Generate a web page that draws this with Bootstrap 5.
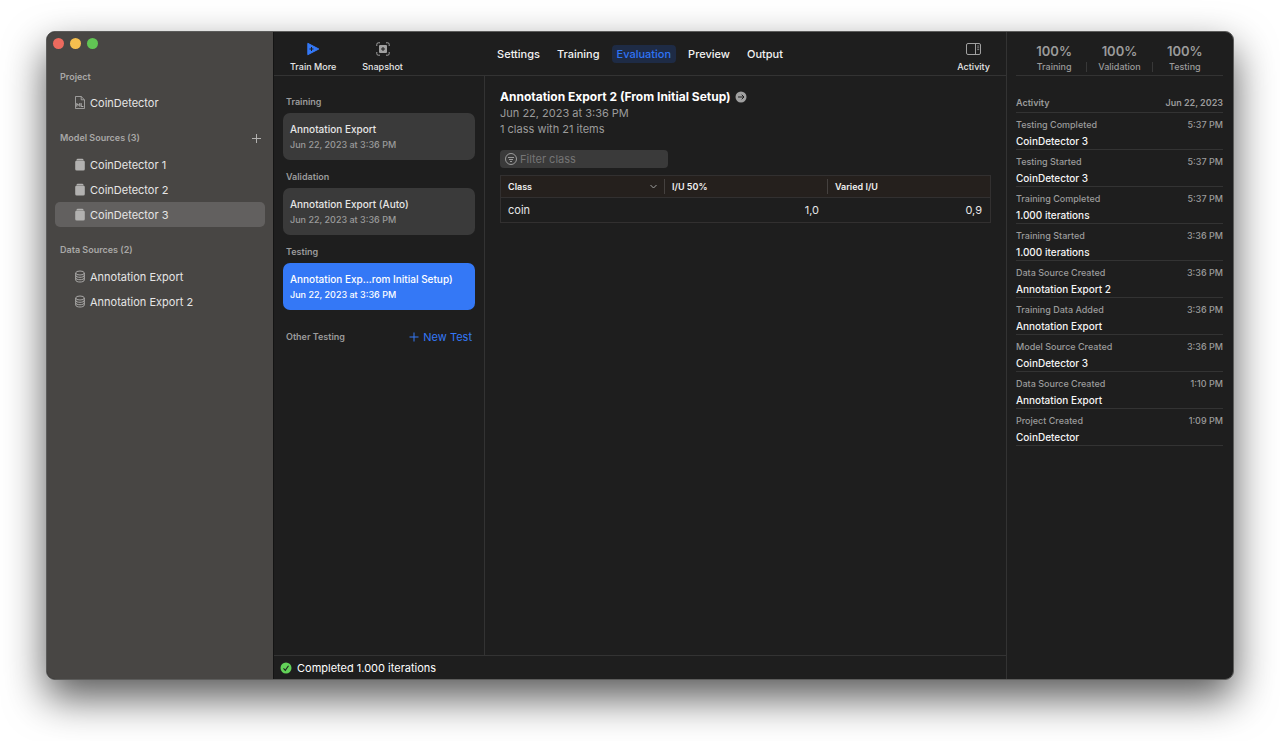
<!DOCTYPE html>
<html lang="en">
<head>
<meta charset="utf-8">
<meta name="viewport" content="width=device-width, initial-scale=1">
<title>CoinDetector</title>
<link href="https://cdn.jsdelivr.net/npm/bootstrap@5.3.0/dist/css/bootstrap.min.css" rel="stylesheet">
<style>
  body { font-family: Inter, "Liberation Sans", sans-serif; font-size: 11px; line-height: 16px; background: #fff; color: #e6e6e6; padding: 31px 46px 61px; }
  button, input { font: inherit; color: inherit; }
  a { color: inherit; text-decoration: none; }
  svg { display: block; flex: none; }
  .app-window { background: #1e1e1e; border: 1px solid #5c5c5b; border-radius: 9px; box-shadow: 0 18px 40px rgba(0,0,0,.65); }
  .plain-btn { background: none; border: 0; padding: 0; }
  .dim { color: #9b9b9b; }

  .side-bar { width: 227px; background: #484644; border-right: 1px solid #141414; padding: 6px 8px; }
  .lights { gap: 6px; margin: 0 -2px; padding-bottom: 5px; }
  .light { width: 11px; height: 11px; border-radius: 50%; }
  .light-close { background: #ed6a5e; }
  .light-min { background: #f5bf4f; }
  .light-zoom { background: #61c554; }
  .side-head { color: #a9a8a7; font-size: 9px; font-weight: 600; line-height: 18px; margin: 0; }
  .side-title { padding: 0 4px 0 5px; margin: 14px 0 5px; }
  .side-row { color: #e6e5e5; height: 25px; padding-left: 20px; border-radius: 5px; gap: 5px; }
  .side-row.active { background: #62605f; }
  .side-row svg { color: #b2b1b0; }

  .top-bar { height: 44px; border-bottom: 1px solid #333; padding: 0 16px; }
  .tools { flex: 1; gap: 26px; padding-top: 8px; }
  .tool-btn { font-size: 9px; font-weight: 500; line-height: 12px; gap: 5px; }
  .tabs { gap: 7px; }
  .tab-link { height: 18px; line-height: 18px; padding: 0 5px; border-radius: 4px; font-weight: 500; color: #f2f2f2; }
  .tab-link.active { background: #1e2b45; color: #2f74f5; }

  .tests { width: 211px; border-right: 1px solid #333; padding: 17px 9px; }
  .test-head { color: #9b9b9b; font-size: 9px; font-weight: 600; line-height: 18px; margin: 0 0 2px; padding: 0 3px; }
  .test-card { background: #3a3a3a; border-radius: 7px; height: 47px; padding: 0 7px; margin-bottom: 8px; font-size: 10px; font-weight: 500; }
  .test-card .dim { font-size: 9px; }
  .test-card.active { background: #3478f6; color: #fff; }
  .test-card.active .dim { color: #fff; }
  .other { margin-top: 10px; padding-right: 3px; }
  .blue { color: #3478f6; }

  .details { padding: 13px 15px; }
  .details h1 { font-size: 12px; font-weight: 700; line-height: 16px; color: #fff; margin: 0; }
  .filter-box { width: 168px; height: 18px; background: #3a3a3a; border-radius: 4px; padding: 0 5px; margin: 13px 0 7px; gap: 3px; color: #9b9b9b; }
  .filter-box input { background: none; border: 0; padding: 0; outline: 0; width: 100%; height: 18px; }
  .filter-box input::placeholder { color: #757575; opacity: 1; }
  .class-table { table-layout: fixed; border: 1px solid #323030; border-collapse: separate; border-spacing: 0; }
  .class-table th { background: #25201d; color: #f0f0f0; font-size: 9px; font-weight: 600; height: 22px; padding: 0; border-bottom: 1px solid #323030; }
  .class-table th div { padding: 0 7px; height: 15px; line-height: 15px; }
  .class-table th + th div { border-left: 1px solid #45413f; }
  .class-table td { height: 24px; padding: 0 8px 0 7px; }

  .status-bar { height: 24px; border-top: 1px solid #333; padding: 0 6px; color: #fff; gap: 5px; }

  .log { width: 227px; border-left: 1px solid #333; padding: 0 10px 0 9px; }
  .scores { height: 44px; border-bottom: 1px solid #333; padding: 12px 6px 0; }
  .score { flex: 1; font-size: 9px; line-height: 15px; color: #9b9b9b; font-weight: 500; }
  .score strong { font-size: 13px; font-weight: 600; display: block; }
  .scores .rule { width: 1px; height: 10px; background: #383838; margin-top: 18px; }
  .log-head { color: #9b9b9b; font-size: 9px; font-weight: 600; line-height: 18px; padding: 18px 0 0; border-bottom: 1px solid #333; height: 37px; }
  .log-row { border-bottom: 1px solid #333; height: 37px; padding-top: 4px; font-size: 10px; line-height: 16px; font-weight: 500; color: #f5f5f5; }
  .log-row .dim { font-size: 9px; }
</style>
</head>
<body class="d-flex min-vh-100">
<div class="app-window d-flex flex-grow-1 overflow-hidden">

  <nav class="side-bar flex-shrink-0" aria-label="Project">
    <div class="lights d-flex">
      <span class="light light-close"></span><span class="light light-min"></span><span class="light light-zoom"></span>
    </div>
    <h2 class="side-head side-title mb-1">Project</h2>
    <a href="#" class="side-row d-flex align-items-center">
      <svg width="10" height="13" viewBox="0 0 10 13" fill="none" stroke="currentColor" stroke-width=".8"><path d="M.5.5h5.700l3.300 3.300v8.700h-9zM6.200.5v3.300h3.300"/><path d="M1.800 10.700V7.400l1.500 2 1.500-2v3.300M6.200 7.200v3.300h2.200" stroke-width="1"/></svg>
      CoinDetector</a>
    <div class="side-title d-flex justify-content-between align-items-center">
      <h2 class="side-head">Model Sources (3)</h2>
      <button class="plain-btn" aria-label="Add model source"><svg width="9" height="9" viewBox="0 0 9 9" stroke="#b2b1b0"><path d="M4.500 0v9M0 4.500h9"/></svg></button>
    </div>
    <a href="#" class="side-row d-flex align-items-center"><svg width="10" height="13" viewBox="0 0 10 13" fill="currentColor"><path d="M1.500 2.200Q1.500.8 2.800.8h4.400q1.300 0 1.300 1.400z"/><rect x=".2" y="2.600" width="9.600" height="10" rx="1.500"/></svg>CoinDetector 1</a>
    <a href="#" class="side-row d-flex align-items-center"><svg width="10" height="13" viewBox="0 0 10 13" fill="currentColor"><path d="M1.500 2.200Q1.500.8 2.800.8h4.400q1.300 0 1.300 1.400z"/><rect x=".2" y="2.600" width="9.600" height="10" rx="1.500"/></svg>CoinDetector 2</a>
    <a href="#" class="side-row d-flex align-items-center active" aria-current="page"><svg width="10" height="13" viewBox="0 0 10 13" fill="currentColor"><path d="M1.500 2.200Q1.500.8 2.800.8h4.400q1.300 0 1.300 1.400z"/><rect x=".2" y="2.600" width="9.600" height="10" rx="1.500"/></svg>CoinDetector 3</a>
    <h2 class="side-head side-title">Data Sources (2)</h2>
    <a href="#" class="side-row d-flex align-items-center"><svg width="10" height="13" viewBox="0 0 10 13" fill="none" stroke="currentColor" stroke-width=".9"><ellipse cx="5" cy="3" rx="4.300" ry="2"/><path d="M.7 3v7c0 2.700 8.600 2.700 8.600 0V3M.7 5.300c0 2.700 8.600 2.700 8.600 0M.7 7.700c0 2.700 8.600 2.700 8.600 0"/></svg>Annotation Export</a>
    <a href="#" class="side-row d-flex align-items-center"><svg width="10" height="13" viewBox="0 0 10 13" fill="none" stroke="currentColor" stroke-width=".9"><ellipse cx="5" cy="3" rx="4.300" ry="2"/><path d="M.7 3v7c0 2.700 8.600 2.700 8.600 0V3M.7 5.300c0 2.700 8.600 2.700 8.600 0M.7 7.700c0 2.700 8.600 2.700 8.600 0"/></svg>Annotation Export 2</a>
  </nav>

  <main class="d-flex flex-column flex-grow-1">
    <header class="top-bar d-flex align-items-center">
      <div class="tools d-flex">
        <button class="plain-btn tool-btn d-flex flex-column align-items-center">
          <svg width="14" height="14" viewBox="0 0 14 14"><path d="M1.800 1.300v11.400L12.800 7z" fill="#3478f6" stroke="#3478f6" stroke-linejoin="round"/><path d="M5.500 5v4M3.500 7h4" stroke="#1e1e1e"/></svg>
          Train More</button>
        <button class="plain-btn tool-btn d-flex flex-column align-items-center">
          <svg width="14" height="14" viewBox="0 0 14 14" fill="none" stroke="#a0a0a0"><path d="M.8 4V2.300Q.8.8 2.300.8H4M10 .8h1.700q1.500 0 1.500 1.500V4M13.200 10v1.700q0 1.500-1.500 1.500H10M4 13.200H2.300q-1.500 0-1.500-1.500V10"/><rect x="3" y="3" width="8" height="8" rx="1" fill="#a0a0a0" stroke="none"/><path d="M7 5v4M5 7h4" stroke="#1e1e1e"/></svg>
          Snapshot</button>
      </div>
      <nav class="tabs d-flex" aria-label="Views">
        <a href="#" class="tab-link">Settings</a>
        <a href="#" class="tab-link">Training</a>
        <a href="#" class="tab-link active" aria-current="page">Evaluation</a>
        <a href="#" class="tab-link">Preview</a>
        <a href="#" class="tab-link">Output</a>
      </nav>
      <div class="tools d-flex justify-content-end">
        <button class="plain-btn tool-btn d-flex flex-column align-items-center">
          <svg width="15" height="14" viewBox="0 0 15 14" fill="none" stroke="#a0a0a0"><rect x=".5" y="1.500" width="14" height="11" rx="1.500"/><path d="M9.500 1.500v11"/><path d="M11.200 4h2M11.200 5.800h2M11.200 7.600h2" stroke-width=".8"/></svg>
          Activity</button>
      </div>
    </header>

    <div class="d-flex flex-grow-1">
      <section class="tests flex-shrink-0">
        <h2 class="test-head">Training</h2>
        <button class="plain-btn test-card w-100 text-start"><span class="d-block">Annotation Export</span><span class="d-block dim">Jun 22, 2023 at 3:36 PM</span></button>
        <h2 class="test-head">Validation</h2>
        <button class="plain-btn test-card w-100 text-start"><span class="d-block">Annotation Export (Auto)</span><span class="d-block dim">Jun 22, 2023 at 3:36 PM</span></button>
        <h2 class="test-head">Testing</h2>
        <button class="plain-btn test-card active w-100 text-start"><span class="d-block">Annotation Exp...rom Initial Setup)</span><span class="d-block dim">Jun 22, 2023 at 3:36 PM</span></button>
        <div class="other d-flex justify-content-between align-items-center">
          <h2 class="test-head m-0">Other Testing</h2>
          <button class="plain-btn blue d-flex align-items-center gap-1"><svg width="10" height="10" viewBox="0 0 10 10" stroke="currentColor"><path d="M5 .5v9M.5 5h9"/></svg>New Test</button>
        </div>
      </section>

      <section class="details flex-grow-1">
        <div class="d-flex align-items-center gap-1">
          <h1>Annotation Export 2 (From Initial Setup)</h1>
          <button class="plain-btn" aria-label="Show data source"><svg width="12" height="12" viewBox="0 0 12 12"><circle cx="6" cy="6" r="5.500" fill="#a0a0a0"/><path d="M3 6h6M6.700 3.700 9 6 6.700 8.300" fill="none" stroke="#1e1e1e"/></svg></button>
        </div>
        <div class="dim">Jun 22, 2023 at 3:36 PM</div>
        <div class="dim">1 class with 21 items</div>
        <div class="filter-box d-flex align-items-center">
          <label for="filter" aria-label="Filter class"><svg width="12" height="12" viewBox="0 0 12 12" fill="none" stroke="currentColor"><circle cx="6" cy="6" r="5.500"/><path d="M3 4.500h6M4 6.500h4M5 8.500h2"/></svg></label>
          <input id="filter" type="text" placeholder="Filter class">
        </div>
        <table class="class-table w-100">
          <thead><tr>
            <th scope="col"><div class="d-flex justify-content-between align-items-center">Class<svg width="7" height="5" viewBox="0 0 7 5" fill="none" stroke="#a0a0a0"><path d="M.5 1l3 3 3-3"/></svg></div></th>
            <th scope="col"><div>I/U 50%</div></th>
            <th scope="col"><div>Varied I/U</div></th>
          </tr></thead>
          <tbody><tr><td>coin</td><td class="text-end">1,0</td><td class="text-end">0,9</td></tr></tbody>
        </table>
      </section>
    </div>

    <footer class="status-bar d-flex align-items-center">
      <svg width="12" height="12" viewBox="0 0 12 12"><circle cx="6" cy="6" r="5.500" fill="#62d158"/><path d="M3.500 6.300 5.300 8.300 8.500 3.800" fill="none" stroke="#1e1e1e" stroke-width="1.100"/></svg>
      <span>Completed 1.000 iterations</span>
    </footer>
  </main>

  <aside class="log flex-shrink-0" aria-label="Activity">
    <div class="scores d-flex text-center">
      <div class="score"><strong>100%</strong>Training</div><div class="rule"></div>
      <div class="score"><strong>100%</strong>Validation</div><div class="rule"></div>
      <div class="score"><strong>100%</strong>Testing</div>
    </div>
    <div class="log-head d-flex justify-content-between"><span>Activity</span><span>Jun 22, 2023</span></div>
    <div class="log-row"><div class="dim d-flex justify-content-between"><span>Testing Completed</span><time>5:37 PM</time></div>CoinDetector 3</div>
    <div class="log-row"><div class="dim d-flex justify-content-between"><span>Testing Started</span><time>5:37 PM</time></div>CoinDetector 3</div>
    <div class="log-row"><div class="dim d-flex justify-content-between"><span>Training Completed</span><time>5:37 PM</time></div>1.000 iterations</div>
    <div class="log-row"><div class="dim d-flex justify-content-between"><span>Training Started</span><time>3:36 PM</time></div>1.000 iterations</div>
    <div class="log-row"><div class="dim d-flex justify-content-between"><span>Data Source Created</span><time>3:36 PM</time></div>Annotation Export 2</div>
    <div class="log-row"><div class="dim d-flex justify-content-between"><span>Training Data Added</span><time>3:36 PM</time></div>Annotation Export</div>
    <div class="log-row"><div class="dim d-flex justify-content-between"><span>Model Source Created</span><time>3:36 PM</time></div>CoinDetector 3</div>
    <div class="log-row"><div class="dim d-flex justify-content-between"><span>Data Source Created</span><time>1:10 PM</time></div>Annotation Export</div>
    <div class="log-row"><div class="dim d-flex justify-content-between"><span>Project Created</span><time>1:09 PM</time></div>CoinDetector</div>
  </aside>
</div>
<script src="https://cdn.jsdelivr.net/npm/bootstrap@5.3.0/dist/js/bootstrap.bundle.min.js"></script>
</body>
</html>
